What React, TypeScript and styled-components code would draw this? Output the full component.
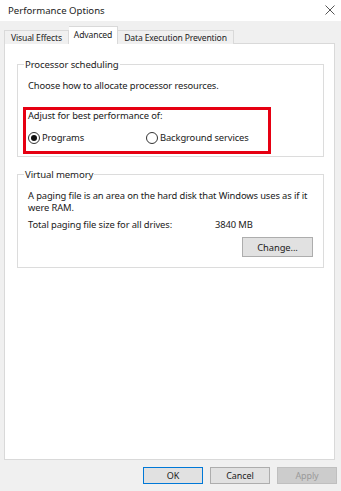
import React from 'react';
import styled, { createGlobalStyle, css } from 'styled-components';

const GlobalStyle = createGlobalStyle`
  html, body {
    margin: 0;
    padding: 0;
    background: #f0f0f0;
  }
  body {
    font-family: "Noto Sans", "Open Sans", sans-serif;
    font-size: 9.4px;
    letter-spacing: -0.12px;
    color: #1a1a1a;
  }
`;

const Window = styled.div`
  width: 341px;
  height: 491px;
  display: flex;
  flex-direction: column;
  background: #f0f0f0;
  overflow: hidden;
`;

const TitleBar = styled.div`
  height: 20px;
  display: flex;
  align-items: center;
  justify-content: space-between;
  padding: 0 6px 1px 8px;
  background: #ffffff;
  font-size: 9.6px;
  letter-spacing: 0;
  color: #222;
`;

const CloseButton = styled.span`
  display: flex;
  align-items: center;
  color: #444;
`;

const TabStrip = styled.div`
  display: flex;
  align-items: flex-end;
  height: 23px;
  padding-left: 4px;
  margin-bottom: -1px;
  position: relative;
  z-index: 1;
`;

const Tab = styled.div<{ active?: boolean }>`
  height: 13px;
  display: flex;
  align-items: center;
  padding: 0 6px;
  font-size: 8.6px;
  letter-spacing: -0.15px;
  color: #222;
  background: #f0f0f0;
  border: 1px solid #d9d9d9;
  border-bottom: none;
  & + & {
    border-left: none;
  }
  ${({ active }) =>
    active &&
    css`
      height: 16px;
      padding: 0 5px 1px;
      background: #ffffff;
      border-left: 1px solid #d9d9d9;
      & + * {
        border-left: none;
      }
    `}
`;

const Panel = styled.div`
  flex: 1;
  margin: 0 6px 0 4px;
  background: #ffffff;
  border: 1px solid #d9d9d9;
  padding: 14px 10px 0 12px;
  display: flex;
  flex-direction: column;
  gap: 11px;
`;

const GroupBox = styled.fieldset<{ height: number }>`
  margin: 0;
  padding: 4px 4px 0 10px;
  border: 1px solid #dcdcdc;
  height: ${({ height }) => height}px;
  box-sizing: border-box;
  min-width: 0;
`;

const Legend = styled.legend`
  padding: 0 1px;
  margin-left: -4px;
  font-size: 9.6px;
  color: #222;
`;

const Text = styled.div<{ gap?: number }>`
  line-height: 12px;
  white-space: nowrap;
  margin-top: ${({ gap }) => gap ?? 0}px;
`;

const Highlight = styled.div`
  margin: 15px 48px 0 -5px;
  border: 3px solid #e60012;
  padding: 0 0 7px 2px;
`;

const RadioRow = styled.div`
  display: flex;
  margin-top: 9px;
`;

const RadioOption = styled.label<{ width?: number }>`
  display: flex;
  align-items: center;
  gap: 2px;
  width: ${({ width }) => (width ? `${width}px` : 'auto')};
`;

const RadioCircle = styled.span<{ checked?: boolean }>`
  width: 12px;
  height: 12px;
  box-sizing: border-box;
  border-radius: 50%;
  border: 1px solid #333;
  display: flex;
  align-items: center;
  justify-content: center;
  &::after {
    content: '';
    width: 6px;
    height: 6px;
    border-radius: 50%;
    background: ${({ checked }) => (checked ? '#111' : 'transparent')};
  }
`;

const InfoRow = styled.div`
  display: flex;
  margin-top: 5px;
  line-height: 12px;
`;

const InfoLabel = styled.span`
  width: 187px;
`;

const ButtonRight = styled.div`
  display: flex;
  justify-content: flex-end;
  margin: 6px 6px 0 0;
`;

const Button = styled.button<{ primary?: boolean }>`
  width: 60px;
  height: 17px;
  padding: 0;
  font-family: inherit;
  font-size: 9px;
  letter-spacing: -0.1px;
  color: #222;
  background: #e1e1e1;
  border: 1px solid #adadad;
  ${({ primary }) =>
    primary &&
    css`
      border-color: #0078d7;
    `}
  &:disabled {
    background: #cccccc;
    border-color: #bfbfbf;
    color: #9a9a9a;
  }
`;

const ChangeButton = styled(Button)`
  width: 71px;
  height: 20px;
  font-size: 9.4px;
`;

const Footer = styled.div`
  display: flex;
  justify-content: flex-end;
  gap: 7px;
  padding: 7px 4px 7px 0;
`;

export default function App() {
  return (
    <Window>
      <GlobalStyle />
      <TitleBar>
        <span>Performance Options</span>
        <CloseButton>
          <svg width="10" height="10" viewBox="0 0 10 10">
            <path d="M0.5 0.5 L9.5 9.5 M9.5 0.5 L0.5 9.5" stroke="#555" strokeWidth="1" />
          </svg>
        </CloseButton>
      </TitleBar>
      <TabStrip>
        <Tab>Visual Effects</Tab>
        <Tab active>Advanced</Tab>
        <Tab>Data Execution Prevention</Tab>
      </TabStrip>
      <Panel>
        <GroupBox height={99}>
          <Legend>Processor scheduling</Legend>
          <Text gap={5}>Choose how to allocate processor resources.</Text>
          <Highlight>
            <Text>Adjust for best performance of:</Text>
            <RadioRow>
              <RadioOption width={118}>
                <RadioCircle checked />
                Programs
              </RadioOption>
              <RadioOption>
                <RadioCircle />
                Background services
              </RadioOption>
            </RadioRow>
          </Highlight>
        </GroupBox>
        <GroupBox height={100}>
          <Legend>Virtual memory</Legend>
          <Text gap={5}>
            A paging file is an area on the hard disk that Windows uses as if it
            <br />
            were RAM.
          </Text>
          <InfoRow>
            <InfoLabel>Total paging file size for all drives:</InfoLabel>
            <span>3840 MB</span>
          </InfoRow>
          <ButtonRight>
            <ChangeButton>Change...</ChangeButton>
          </ButtonRight>
        </GroupBox>
      </Panel>
      <Footer>
        <Button primary>OK</Button>
        <Button>Cancel</Button>
        <Button disabled>Apply</Button>
      </Footer>
    </Window>
  );
}
